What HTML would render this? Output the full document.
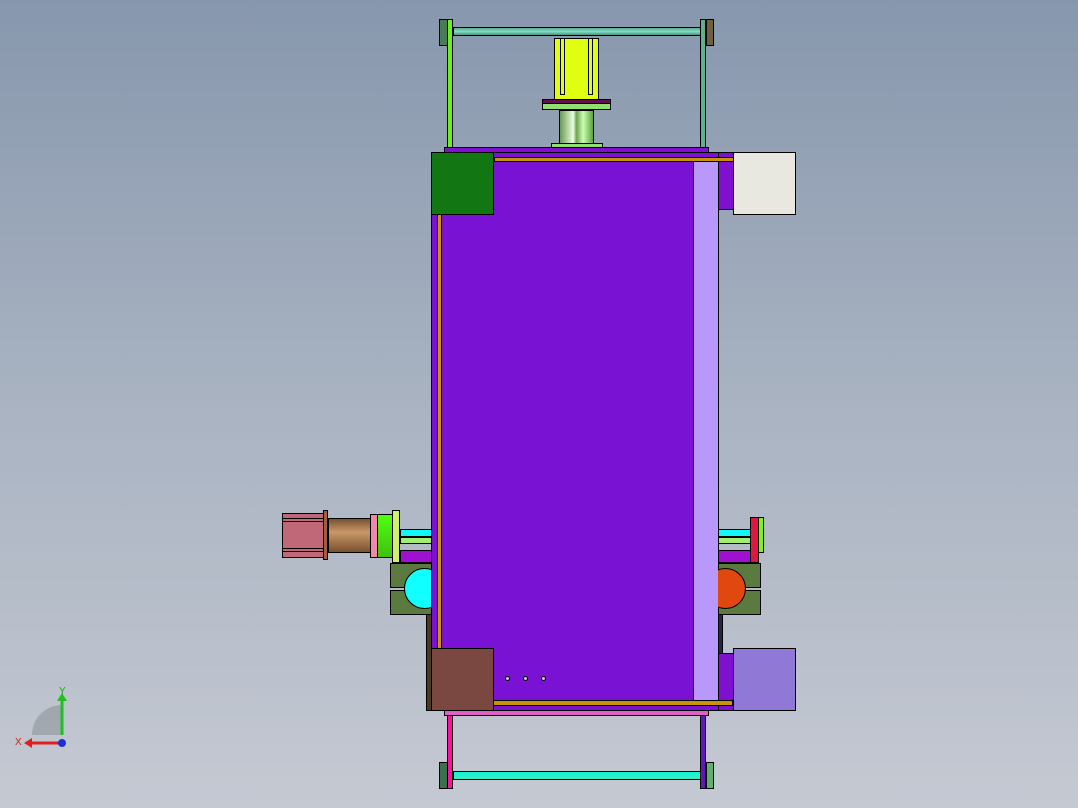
<!DOCTYPE html><html><head><style>
body{margin:0;width:1078px;height:808px;overflow:hidden;background:linear-gradient(#8797ad,#a9b3c2 50%,#c5c9d2);position:relative;font-family:"Liberation Sans",sans-serif}
div{position:absolute;box-sizing:border-box}
.b{border:1px solid #000}
</style></head><body>
<!-- top frame -->
<div class="b" style="left:453px;top:27px;width:248px;height:9px;background:linear-gradient(#5aa890,#7fe0c0,#4a9080)"></div>
<div class="b" style="left:439px;top:19px;width:9px;height:27px;background:#4a7a58"></div>
<div class="b" style="left:447px;top:19px;width:6px;height:130px;background:#6af01a"></div>
<div class="b" style="left:700px;top:19px;width:6px;height:130px;background:#60b090"></div>
<div class="b" style="left:706px;top:19px;width:8px;height:27px;background:#6e6040"></div>
<div class="b" style="left:554px;top:38px;width:45px;height:62px;background:#e0ff10"></div>
<div style="left:560px;top:38px;width:5px;height:57px;border:1px solid #000"></div>
<div style="left:588px;top:38px;width:5px;height:57px;border:1px solid #000"></div>
<div class="b" style="left:542px;top:99px;width:69px;height:5px;background:#601050"></div>
<div class="b" style="left:542px;top:103px;width:69px;height:7px;background:#90e070"></div>
<div class="b" style="left:559px;top:110px;width:35px;height:34px;background:linear-gradient(90deg,#6a9a50,#e8ffe0 40%,#70a050 50%,#c8ffb0 70%,#60a040)"></div>
<div class="b" style="left:551px;top:143px;width:52px;height:5px;background:#90e070"></div>
<!-- body -->
<div class="b" style="left:444px;top:147px;width:265px;height:6px;background:#8010d0"></div>
<div class="b" style="left:431px;top:152px;width:288px;height:559px;background:#7a12d4"></div>
<div class="b" style="left:718px;top:152px;width:16px;height:58px;background:#8010d0"></div>
<div class="b" style="left:718px;top:653px;width:16px;height:58px;background:#8010d0"></div>
<div class="b" style="left:494px;top:157px;width:240px;height:5px;background:#c8920a"></div>
<div class="b" style="left:437px;top:160px;width:5px;height:490px;background:#c8920a"></div>
<div class="b" style="left:693px;top:161px;width:26px;height:540px;background:#b898fa"></div>
<div class="b" style="left:431px;top:152px;width:63px;height:63px;background:#127612"></div>
<div class="b" style="left:733px;top:152px;width:63px;height:63px;background:#e8e8e0"></div>
<div class="b" style="left:493px;top:700px;width:240px;height:6px;background:#c8920a"></div>
<div class="b" style="left:426px;top:614px;width:6px;height:97px;background:#4a3a20"></div>
<div class="b" style="left:431px;top:648px;width:63px;height:63px;background:#7a4840"></div>
<div class="b" style="left:733px;top:648px;width:63px;height:63px;background:#9078d6"></div>
<div style="left:505px;top:676px;width:5px;height:5px;border-radius:50%;background:#ccc;border:1px solid #000"></div>
<div style="left:523px;top:676px;width:5px;height:5px;border-radius:50%;background:#ccc;border:1px solid #000"></div>
<div style="left:541px;top:676px;width:5px;height:5px;border-radius:50%;background:#ccc;border:1px solid #000"></div>
<!-- side mounts -->
<div class="b" style="left:400px;top:529px;width:32px;height:8px;background:#10f8f8"></div>
<div class="b" style="left:400px;top:537px;width:32px;height:7px;background:#a0f070"></div>
<div class="b" style="left:400px;top:550px;width:32px;height:13px;background:#a010d0"></div>
<div class="b" style="left:718px;top:529px;width:34px;height:8px;background:#10f8f8"></div>
<div class="b" style="left:718px;top:537px;width:34px;height:7px;background:#a0f070"></div>
<div class="b" style="left:718px;top:550px;width:34px;height:13px;background:#a010d0"></div>
<div class="b" style="left:390px;top:563px;width:42px;height:25px;background:#5a7a40"></div>
<div class="b" style="left:390px;top:590px;width:42px;height:25px;background:#5a7a40"></div>
<div style="left:404px;top:568px;width:41px;height:41px;border-radius:50%;background:#10ffff;border:1px solid #000;clip-path:inset(0 14px 0 0)"></div>
<div class="b" style="left:718px;top:563px;width:43px;height:25px;background:#5a7a40"></div>
<div class="b" style="left:718px;top:590px;width:43px;height:25px;background:#5a7a40"></div>
<div style="left:705px;top:568px;width:41px;height:41px;border-radius:50%;background:#e04810;border:1px solid #000;clip-path:inset(0 0 0 13px)"></div>
<div class="b" style="left:718px;top:614px;width:5px;height:40px;background:#202848"></div>
<!-- left motor -->
<div class="b" style="left:282px;top:513px;width:42px;height:45px;background:#c06878"></div>
<div style="left:283px;top:518px;width:40px;height:4px;border-top:1px solid #000;border-bottom:1px solid #000"></div>
<div style="left:283px;top:548px;width:40px;height:4px;border-top:1px solid #000;border-bottom:1px solid #000"></div>
<div class="b" style="left:323px;top:510px;width:5px;height:50px;background:#9a6040"></div>
<div class="b" style="left:328px;top:518px;width:43px;height:35px;background:linear-gradient(#7a5030,#c89868 40%,#7a5030)"></div>
<div class="b" style="left:370px;top:514px;width:8px;height:44px;background:#f088a8"></div>
<div class="b" style="left:377px;top:514px;width:16px;height:44px;background:linear-gradient(#50ff10,#40c010)"></div>
<div class="b" style="left:392px;top:510px;width:8px;height:53px;background:#d0f070"></div>
<!-- right part -->
<div class="b" style="left:750px;top:517px;width:9px;height:46px;background:#e01840"></div>
<div class="b" style="left:758px;top:517px;width:6px;height:36px;background:#80f020"></div>
<!-- bottom frame -->
<div class="b" style="left:444px;top:710px;width:265px;height:6px;background:#e060c8"></div>
<div class="b" style="left:447px;top:715px;width:6px;height:74px;background:#ff10a0"></div>
<div class="b" style="left:700px;top:715px;width:6px;height:74px;background:#6018b8"></div>
<div class="b" style="left:453px;top:771px;width:248px;height:9px;background:linear-gradient(#10f8d8,#40e8c0)"></div>
<div class="b" style="left:439px;top:762px;width:9px;height:27px;background:#3a7050"></div>
<div class="b" style="left:706px;top:762px;width:8px;height:27px;background:#60b070"></div>
<!-- triad -->
<svg style="position:absolute;left:12px;top:685px" width="70" height="70">
<path d="M20 50 A30 30 0 0 1 50 20 L50 50Z" fill="#9aa0a8" opacity=".8"/>
<line x1="50" y1="50" x2="50" y2="14" stroke="#20c020" stroke-width="3"/>
<polygon points="45,16 55,16 50,8" fill="#20c020"/>
<line x1="50" y1="58" x2="18" y2="58" stroke="#e02020" stroke-width="3"/>
<polygon points="20,53 20,63 12,58" fill="#e02020"/>
<circle cx="50" cy="58" r="4" fill="#2030d0"/>
<text x="47" y="9" font-size="10" fill="#20a020">Y</text>
<text x="3" y="60" font-size="10" fill="#d02020">X</text>
</svg>
</body></html>
